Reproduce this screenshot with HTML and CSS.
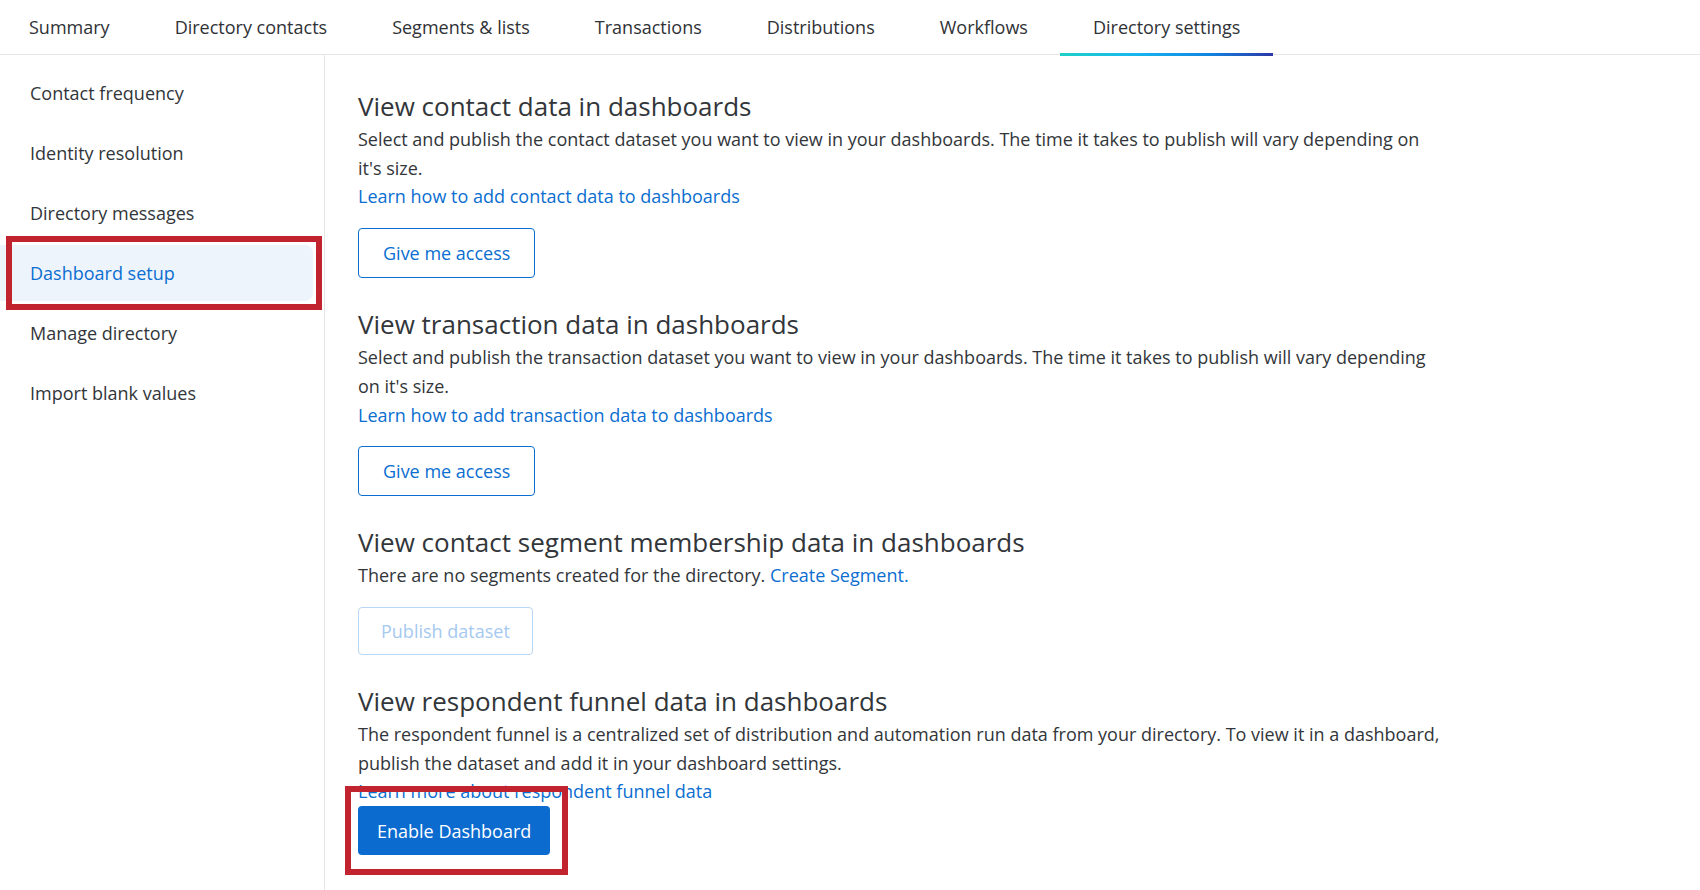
FILE: index.html
```html
<!DOCTYPE html>
<html lang="en">
<head>
  <meta charset="UTF-8" />
  <title>Directory settings - Dashboard setup</title>
  <link rel="stylesheet" href="styles.css">
</head>
<body>
  <nav class="tabs">
    <a class="tab">Summary</a>
    <a class="tab">Directory contacts</a>
    <a class="tab">Segments &amp; lists</a>
    <a class="tab">Transactions</a>
    <a class="tab">Distributions</a>
    <a class="tab">Workflows</a>
    <a class="tab active">Directory settings</a>
  </nav>

  <div class="layout">
    <aside class="sidebar">
      <a class="side-item">Contact frequency</a>
      <a class="side-item">Identity resolution</a>
      <a class="side-item">Directory messages</a>
      <a class="side-item selected">Dashboard setup<span class="callout"></span></a>
      <a class="side-item">Manage directory</a>
      <a class="side-item">Import blank values</a>
    </aside>

    <main class="content">
      <section class="block">
        <h2>View contact data in dashboards</h2>
        <p>Select and publish the contact dataset you want to view in your dashboards. The time it takes to publish will vary depending on it's size.</p>
        <a class="link">Learn how to add contact data to dashboards</a>
        <button class="btn btn-outline">Give me access</button>
      </section>

      <section class="block">
        <h2>View transaction data in dashboards</h2>
        <p>Select and publish the transaction dataset you want to view in your dashboards. The time it takes to publish will vary depending on it's size.</p>
        <a class="link">Learn how to add transaction data to dashboards</a>
        <button class="btn btn-outline">Give me access</button>
      </section>

      <section class="block">
        <h2>View contact segment membership data in dashboards</h2>
        <p>There are no segments created for the directory. <a class="link">Create Segment.</a></p>
        <button class="btn btn-outline disabled" disabled>Publish dataset</button>
      </section>

      <section class="block">
        <h2>View respondent funnel data in dashboards</h2>
        <p>The respondent funnel is a centralized set of distribution and automation run data from your directory. To view it in a dashboard, publish the dataset and add it in your dashboard settings.</p>
        <a class="link">Learn more about respondent funnel data</a>
        <div class="btn-wrap">
          <button class="btn btn-primary">Enable Dashboard</button>
          <span class="callout"></span>
        </div>
      </section>
    </main>
  </div>
</body>
</html>
```

FILE: styles.css
```css
* {
  margin: 0;
  padding: 0;
  box-sizing: border-box;
}

body {
  font-family: 'Open Sans', 'Noto Sans', sans-serif;
  color: #32363a;
  background: white;
  min-height: 100vh;
}

/* top tabs */
.tabs {
  display: flex;
  height: 55px;
  border-bottom: 1px solid #e6e6e6;
}

.tab {
  position: relative;
  display: flex;
  align-items: center;
  padding: 0 32.5px;
  height: 54px;
  font-size: 18px;
  color: #2f3236;
  white-space: nowrap;
}

.tab:first-child {
  padding-left: 29px;
}

.tab.active::after {
  content: "";
  position: absolute;
  left: 0;
  right: 0;
  bottom: -2px;
  height: 3px;
  background: linear-gradient(90deg, #1fd0c6 0%, #16b6ef 35%, #1285e0 70%, #2c37a6 100%);
}

/* body */
.layout {
  display: flex;
  min-height: calc(100vh - 55px);
}

.sidebar {
  width: 325px;
  flex-shrink: 0;
  border-right: 1px solid #e6e6e6;
  padding-top: 10px;
  display: flex;
  flex-direction: column;
  gap: 4px;
}

.side-item {
  position: relative;
  display: flex;
  align-items: center;
  height: 56px;
  margin-right: 11px;
  padding-left: 30px;
  font-size: 18px;
  color: #32363a;
  border-radius: 0 8px 8px 0;
}

.side-item.selected {
  background: #eef4fc;
  color: #0b6ed0;
}

.callout {
  position: absolute;
  border: 6px solid #c1232f;
  pointer-events: none;
}

.side-item .callout {
  top: -9px;
  right: -9px;
  bottom: -9px;
  left: 6px;
}

.content {
  flex: 1;
  padding: 34px 0 0 33px;
}

.block {
  max-width: 1085px;
  margin-bottom: 29px;
}

h2 {
  font-size: 26px;
  font-weight: 400;
  line-height: 34px;
  margin-bottom: 2px;
  color: #32363a;
}

p, .link {
  font-size: 18px;
  line-height: 28.7px;
}

.link {
  display: block;
  color: #0b6ed0;
  cursor: pointer;
}

p .link {
  display: inline;
}

.btn {
  display: block;
  height: 50px;
  margin-top: 17px;
  padding: 0 24px;
  font-family: inherit;
  font-size: 18px;
  border-radius: 4px;
  cursor: pointer;
}

.btn-outline {
  background: white;
  color: #0b6ed0;
  border: 1px solid #0b6ed0;
}

.btn-outline.disabled {
  height: 48px;
  padding: 0 22px;
  color: #a5c9f0;
  border-color: #b8d6f5;
  cursor: default;
}

.btn-wrap {
  position: relative;
  display: inline-block;
}

.btn-primary {
  margin-top: 0;
  height: 49px;
  padding: 0 19px;
  background: #0b6bcf;
  color: white;
  border: none;
}

.btn-wrap .callout {
  top: -20px;
  right: -18px;
  bottom: -20px;
  left: -13px;
}
```
